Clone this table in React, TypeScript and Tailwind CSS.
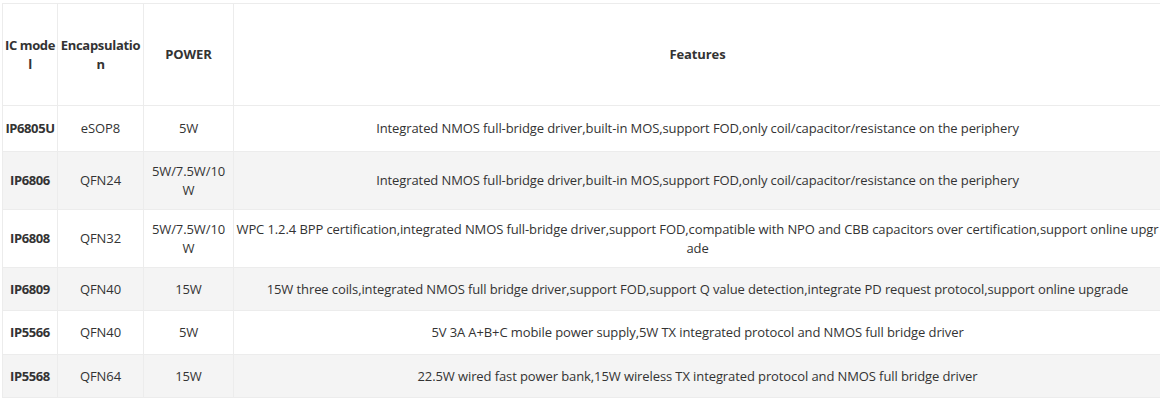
const rows = [
  {
    model: "IP6805U",
    pkg: "eSOP8",
    power: "5W",
    features:
      "Integrated NMOS full-bridge driver,built-in MOS,support FOD,only coil/capacitor/resistance on the periphery",
    h: "h-[46px]",
  },
  {
    model: "IP6806",
    pkg: "QFN24",
    power: "5W/7.5W/10W",
    features:
      "Integrated NMOS full-bridge driver,built-in MOS,support FOD,only coil/capacitor/resistance on the periphery",
    h: "h-[58px]",
  },
  {
    model: "IP6808",
    pkg: "QFN32",
    power: "5W/7.5W/10W",
    features:
      "WPC 1.2.4 BPP certification,integrated NMOS full-bridge driver,support FOD,compatible with NPO and CBB capacitors over certification,support online upgrade",
    h: "h-[58px]",
  },
  {
    model: "IP6809",
    pkg: "QFN40",
    power: "15W",
    features:
      "15W three coils,integrated NMOS full bridge driver,support FOD,support Q value detection,integrate PD request protocol,support online upgrade",
    h: "h-[43px]",
  },
  {
    model: "IP5566",
    pkg: "QFN40",
    power: "5W",
    features:
      "5V 3A A+B+C mobile power supply,5W TX integrated protocol and NMOS full bridge driver",
    h: "h-[44px]",
  },
  {
    model: "IP5568",
    pkg: "QFN64",
    power: "15W",
    features:
      "22.5W wired fast power bank,15W wireless TX integrated protocol and NMOS full bridge driver",
    h: "h-[43px]",
  },
];

const cell = "border border-[#ececec] px-[1px] text-center";
const padded = "border border-[#ececec] px-[4px] text-center";

export default function App() {
  return (
    <div className="h-[401px] w-[1160px] overflow-hidden bg-white pl-[2px] pt-[3px] font-['Open_Sans','Liberation_Sans',sans-serif] text-[13px] leading-[19px] tracking-[-0.1px] text-[#333]">
      <table className="w-[1160px] table-fixed border-collapse [word-break:break-all]">
        <colgroup>
          <col className="w-[55px]" />
          <col className="w-[86px]" />
          <col className="w-[90px]" />
          <col />
        </colgroup>
        <thead>
          <tr className="h-[102px] font-bold">
            <th className={`${cell} tracking-[-0.4px]`}>IC model</th>
            <th className={`${cell} tracking-[-0.3px]`}>Encapsulation</th>
            <th className={padded}>POWER</th>
            <th className={cell}>Features</th>
          </tr>
        </thead>
        <tbody>
          {rows.map((r, i) => (
            <tr key={r.model} className={`${r.h} ${i % 2 === 0 ? "bg-white" : "bg-[#f4f4f4]"}`}>
              <td className={`${cell} font-bold tracking-[-0.4px]`}>{r.model}</td>
              <td className={cell}>{r.pkg}</td>
              <td className={padded}>{r.power}</td>
              <td className={cell}>{r.features}</td>
            </tr>
          ))}
        </tbody>
      </table>
    </div>
  );
}
